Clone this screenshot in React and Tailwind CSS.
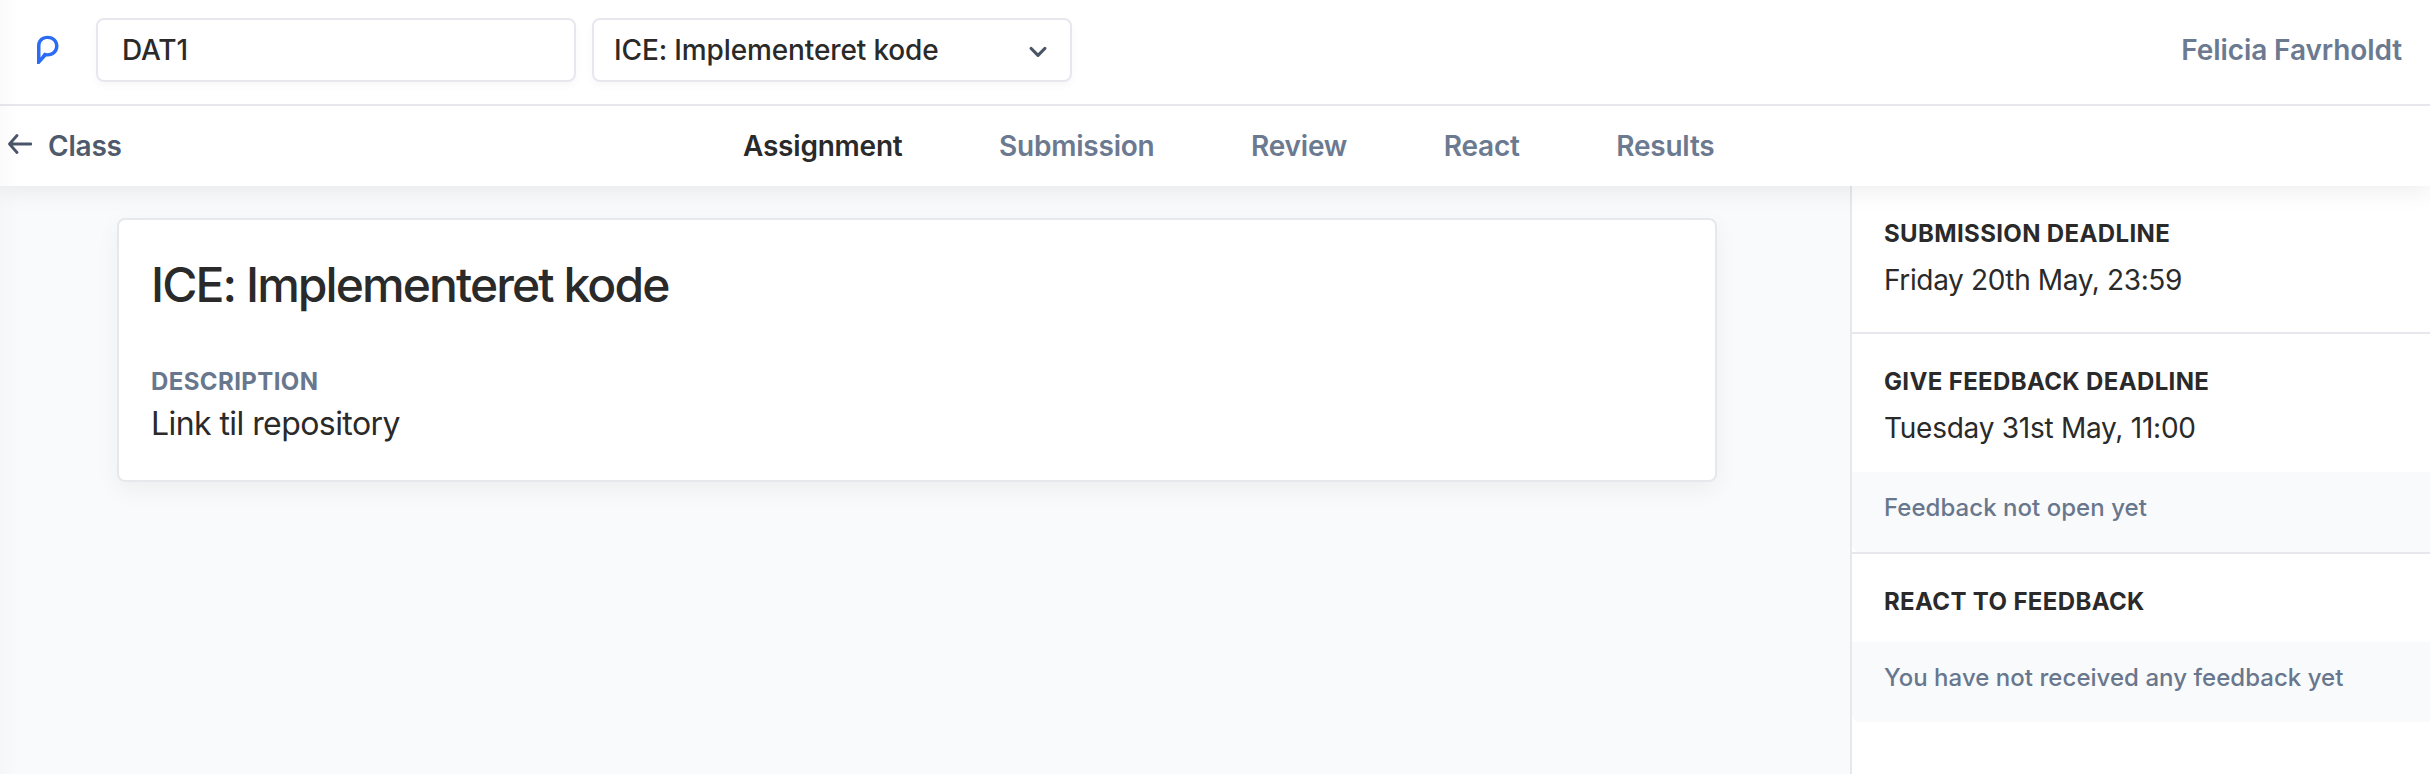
import React from "react";

const tabs = [
  { label: "Assignment", active: true },
  { label: "Submission" },
  { label: "Review" },
  { label: "React" },
  { label: "Results" },
];

function Logo() {
  return (
    <svg className="ml-9 h-8 w-6 shrink-0" viewBox="0 0 24 32">
      <path
        fillRule="evenodd"
        fill="#2b6cf6"
        d="M1 29.900V12C1 5.800 5.400 1.700 11.700 1.700S22.500 6 22.500 12.100 18 22.600 11.700 22.600H10.200L3.300 29.900ZM4.500 23.600V12C4.500 7.800 7.400 5.100 11.700 5.100s7.300 2.900 7.300 7-3 7.100-7.300 7.100c-1.300 0-2.400-.2-3.500-.7Z"
      />
    </svg>
  );
}

function Header() {
  return (
    <header className="relative z-20 flex h-[106px] shrink-0 items-start border-b-2 border-[#e7e8ee] bg-white">
      <div className="flex h-[100px] w-24 shrink-0 items-center">
        <Logo />
      </div>
      <div className="mt-[18px] flex h-16 w-[480px] items-center rounded-lg border-2 border-[#e7e8ee] bg-white pl-6 font-medium tracking-[-0.15px] shadow-[0_4px_8px_rgba(0,0,0,0.03)]">
        DAT1
      </div>
      <div className="mt-[18px] ml-4 flex h-16 w-[480px] items-center justify-between rounded-lg border-2 border-[#e7e8ee] bg-white pr-[23px] pl-5 shadow-[0_4px_8px_rgba(0,0,0,0.03)]">
        <span className="font-medium tracking-[-0.13px]">ICE: Implementeret kode</span>
        <svg className="mt-[3px] h-4 w-[18px]" viewBox="0 0 18 16" fill="none">
          <path d="M2.2 4.500 9 11.4 15.8 4.500" stroke="#4a5568" strokeWidth="3.2" strokeLinecap="round" strokeLinejoin="round" />
        </svg>
      </div>
      <div className="mr-7 ml-auto flex h-[100px] items-center font-semibold tracking-[-0.1px] text-[#6b7a90]">
        Felicia Favrholdt
      </div>
    </header>
  );
}

function Nav() {
  return (
    <nav className="relative z-10 flex h-20 shrink-0 items-center bg-white font-semibold tracking-[-0.22px] shadow-[0_4px_24px_rgba(0,0,0,0.08)]">
      <a className="flex w-[743px] items-center text-[#4f5a6c]">
        <svg className="mb-1 ml-2 h-6 w-6" viewBox="0 0 24 24" fill="none">
          <path d="M9 3.5 1.500 12 9 20.500M1.500 12H23" stroke="#4a5568" strokeWidth="2.8" strokeLinecap="round" strokeLinejoin="round" />
        </svg>
        <span className="ml-4">Class</span>
      </a>
      <div className="flex gap-[96.6px]">
        {tabs.map((t) => (
          <a key={t.label} className={t.active ? "text-[#2a2a2a]" : "text-[#6b7a90]"}>
            {t.label}
          </a>
        ))}
      </div>
    </nav>
  );
}

function Heading({ children }) {
  return <h2 className="text-2xl leading-8 font-bold tracking-[0.36px] uppercase">{children}</h2>;
}

function Notice({ children }) {
  return (
    <div className="flex h-20 items-center rounded-bl-lg bg-[#f9fafc] pb-2 pl-8 text-2xl font-medium tracking-[0.04px] text-[#68778d]">
      {children}
    </div>
  );
}

function Sidebar() {
  return (
    <aside className="w-[580px] shrink-0 border-l-2 border-[#e7e8ee] bg-white">
      <section className="h-[148px] border-b-2 border-[#e7e8ee] pt-8 pl-8">
        <Heading>Submission deadline</Heading>
        <p className="mt-3 leading-9 tracking-[-0.37px]">Friday 20th May, 23:59</p>
      </section>
      <section className="border-b-2 border-[#e7e8ee]">
        <div className="h-[138px] pt-8 pl-8">
          <Heading>Give feedback deadline</Heading>
          <p className="mt-3 leading-9 tracking-[-0.25px]">Tuesday 31st May, 11:00</p>
        </div>
        <Notice>Feedback not open yet</Notice>
      </section>
      <section>
        <div className="h-[88px] pt-8 pl-8">
          <Heading>React to feedback</Heading>
        </div>
        <Notice>You have not received any feedback yet</Notice>
      </section>
    </aside>
  );
}

export default function App() {
  return (
    <div className="relative flex h-[774px] w-[2430px] flex-col overflow-hidden bg-[#f9fafc] font-['Inter',sans-serif] text-[28px] leading-9 text-[#2a2a2a]">
      <Header />
      <Nav />
      <div className="flex min-h-0 flex-1">
        <main className="flex-1 pt-8 pl-[117px]">
          <article className="h-[264px] w-[1600px] rounded-lg border-2 border-[#e7e8ee] bg-white px-8 pt-[35px] shadow-[0_8px_24px_rgba(0,0,0,0.05)]">
            <h1 className="text-5xl leading-[60px] font-medium tracking-[-0.04em]">ICE: Implementeret kode</h1>
            <h2 className="mt-[51px] text-2xl leading-8 font-bold tracking-[0.4px] text-[#68778d]">DESCRIPTION</h2>
            <p className="mt-1.5 text-[32px] leading-10 tracking-[-0.57px]">Link til repository</p>
          </article>
        </main>
        <Sidebar />
      </div>
      <div className="pointer-events-none absolute inset-y-0 left-0 z-30 w-5 bg-linear-to-r from-black/[0.015] to-transparent" />
    </div>
  );
}
